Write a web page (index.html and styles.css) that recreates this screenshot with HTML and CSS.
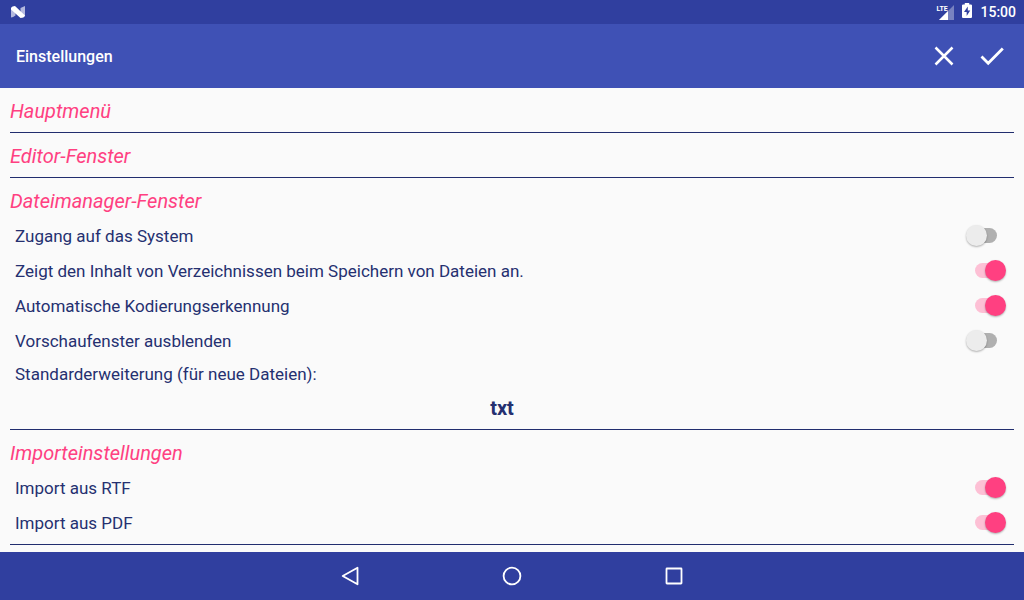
FILE: index.html
```
<!DOCTYPE html>
<html lang="de">
<head>
    <meta charset="UTF-8">
    <meta name="viewport" content="width=device-width, initial-scale=1.0">
    <title>Einstellungen</title>
    <link rel="stylesheet" href="styles.css">
</head>
<body>

    <div class="status-bar">
        <svg class="logo" width="16" height="14" viewBox="0 0 16 14">
            <path d="M1 2.500V12.500Q3 12.500 5.500 10.500V4zM10.500 3 15 1V11.500L10.500 10z" fill="#b4b9de"/>
            <path d="M1 3Q2 1 5 1L15 10.500Q14 13 10.500 13L1 4.500Z" fill="#fff"/>
        </svg>
        <div class="status-icons">
            <div class="signal">
                <span class="network">LTE</span>
                <svg width="15" height="15" viewBox="0 0 15 15">
                    <path d="M15 0V15H0Z" fill="#fff" fill-opacity="0.35"/>
                    <path d="M9 6V15H0Z" fill="#fff"/>
                </svg>
            </div>
            <svg class="battery" width="10" height="15" viewBox="0 0 9 15" preserveAspectRatio="none">
                <path d="M2.500 0h4v1.500H8q1 0 1 1V14q0 1-1 1H1q-1 0-1-1V2.500q0-1 1-1h1.500z" fill="#fff"/>
                <path d="M5.200 3.500 1.800 9h2.400v4L7.400 7.500H5.200z" fill="#303f9f"/>
            </svg>
            <span class="clock">15:00</span>
        </div>
    </div>

    <header class="toolbar">
        <h1>Einstellungen</h1>
        <button type="button" class="icon-button" aria-label="Abbrechen">
            <svg width="24" height="24" viewBox="0 0 24 24">
                <path d="M3.500 3.500 20.500 20.500M20.500 3.500 3.500 20.500" fill="none" stroke="#fff" stroke-width="2.500"/>
            </svg>
        </button>
        <button type="button" class="icon-button" aria-label="Speichern">
            <svg width="24" height="24" viewBox="0 0 24 24">
                <path d="M1.500 12.500 8.200 19.200 22.800 4.600" fill="none" stroke="#fff" stroke-width="2.800"/>
            </svg>
        </button>
    </header>

    <main class="settings">
        <section class="group">
            <h2>Hauptmenü</h2>
        </section>

        <section class="group">
            <h2>Editor-Fenster</h2>
        </section>

        <section class="group">
            <h2>Dateimanager-Fenster</h2>
            <div class="row">
                <label for="system">Zugang auf das System</label>
                <input type="checkbox" class="switch" id="system">
            </div>
            <div class="row">
                <label for="content">Zeigt den Inhalt von Verzeichnissen beim Speichern von Dateien an.</label>
                <input type="checkbox" class="switch" id="content" checked>
            </div>
            <div class="row">
                <label for="encoding">Automatische Kodierungserkennung</label>
                <input type="checkbox" class="switch" id="encoding" checked>
            </div>
            <div class="row">
                <label for="preview">Vorschaufenster ausblenden</label>
                <input type="checkbox" class="switch" id="preview">
            </div>
            <div class="field">
                <label for="extension">Standarderweiterung (für neue Dateien):</label>
                <input type="text" id="extension" value="txt">
            </div>
        </section>

        <section class="group">
            <h2>Importeinstellungen</h2>
            <div class="row">
                <label for="rtf">Import aus RTF</label>
                <input type="checkbox" class="switch" id="rtf" checked>
            </div>
            <div class="row">
                <label for="pdf">Import aus PDF</label>
                <input type="checkbox" class="switch" id="pdf" checked>
            </div>
        </section>
    </main>

    <nav class="nav-bar">
        <button type="button" class="nav-button" aria-label="Zurück">
            <svg width="24" height="24" viewBox="0 0 24 24">
                <path d="M19.500 3.700V20.300L4.700 12Z" fill="none" stroke="#fff" stroke-width="1.800" stroke-linejoin="round"/>
            </svg>
        </button>
        <button type="button" class="nav-button" aria-label="Startseite">
            <svg width="24" height="24" viewBox="0 0 24 24">
                <circle cx="12" cy="12" r="8.400" fill="none" stroke="#fff" stroke-width="1.800"/>
            </svg>
        </button>
        <button type="button" class="nav-button" aria-label="Übersicht">
            <svg width="24" height="24" viewBox="0 0 24 24">
                <rect x="4.500" y="4.500" width="15" height="15" rx="0.500" fill="none" stroke="#fff" stroke-width="1.800"/>
            </svg>
        </button>
    </nav>

</body>
</html>
```
FILE: styles.css
```
* {
    box-sizing: border-box;
}
body {
    margin: 0;
    height: 100vh;
    display: flex;
    flex-direction: column;
    font-family: Roboto, sans-serif;
    background: #fafafa;
    color: #253070;
}
button {
    display: flex;
    align-items: center;
    justify-content: center;
    padding: 0;
    border: none;
    background: none;
    cursor: pointer;
}

/* Status bar */
.status-bar {
    display: flex;
    flex: none;
    align-items: center;
    justify-content: space-between;
    height: 24px;
    padding: 0 8px 0 10px;
    background: #303f9f;
    color: #fff;
}
.status-icons {
    display: flex;
    align-items: center;
    gap: 8px;
}
.signal {
    position: relative;
    display: flex;
    width: 18px;
    justify-content: flex-end;
}
.network {
    position: absolute;
    top: 0;
    left: 0;
    font-size: 7px;
    line-height: 8px;
    font-weight: 700;
}
.battery {
    margin-bottom: 3px;
}
.clock {
    font-size: 14px;
    line-height: 24px;
    font-weight: 500;
}

/* Toolbar */
.toolbar {
    display: flex;
    flex: none;
    align-items: center;
    height: 64px;
    padding: 0 8px 0 16px;
    background: #3f51b5;
    color: #fff;
}
.toolbar h1 {
    flex: 1;
    margin: 0;
    padding-top: 2px;
    font-size: 16px;
    line-height: 24px;
    font-weight: 500;
}
.icon-button {
    width: 48px;
    height: 48px;
}

/* Settings list */
.settings {
    flex: 1;
    min-height: 0;
    overflow: hidden;
    padding: 0 10px;
}
.group {
    padding-bottom: 4px;
    border-bottom: 1px solid #212d6e;
}
.group h2 {
    margin: 0;
    padding: 11px 0 5px;
    font-size: 20px;
    line-height: 24px;
    font-weight: 400;
    font-style: italic;
    color: #ff4081;
}
.row {
    display: flex;
    align-items: center;
    justify-content: space-between;
    height: 35px;
    padding: 0 8px 0 5px;
    font-size: 17px;
}
.switch {
    appearance: none;
    position: relative;
    width: 40px;
    height: 21px;
    margin: 0;
    cursor: pointer;
}
.switch::before {
    content: "";
    position: absolute;
    top: 3px;
    left: 9px;
    width: 22px;
    height: 15px;
    border-radius: 8px;
    background: #b0b0b0;
}
.switch::after {
    content: "";
    position: absolute;
    top: 0;
    left: 0;
    width: 21px;
    height: 21px;
    border-radius: 50%;
    background: #ececec;
    box-shadow: 0 1px 2px rgba(0, 0, 0, 0.3);
}
.switch:checked::before {
    background: #fdc0d5;
}
.switch:checked::after {
    left: 19px;
    background: #ff4081;
}
.field {
    display: flex;
    flex-direction: column;
    padding-right: 20px;
}
.field label {
    padding-left: 5px;
    font-size: 17px;
    line-height: 32px;
}
.field input {
    height: 35px;
    padding: 0;
    border: none;
    background: none;
    color: inherit;
    font-family: inherit;
    font-size: 20px;
    font-weight: 700;
    text-align: center;
}

/* Navigation bar */
.nav-bar {
    display: flex;
    flex: none;
    justify-content: center;
    gap: 66px;
    height: 48px;
    background: #303f9f;
}
.nav-button {
    width: 96px;
}
```
